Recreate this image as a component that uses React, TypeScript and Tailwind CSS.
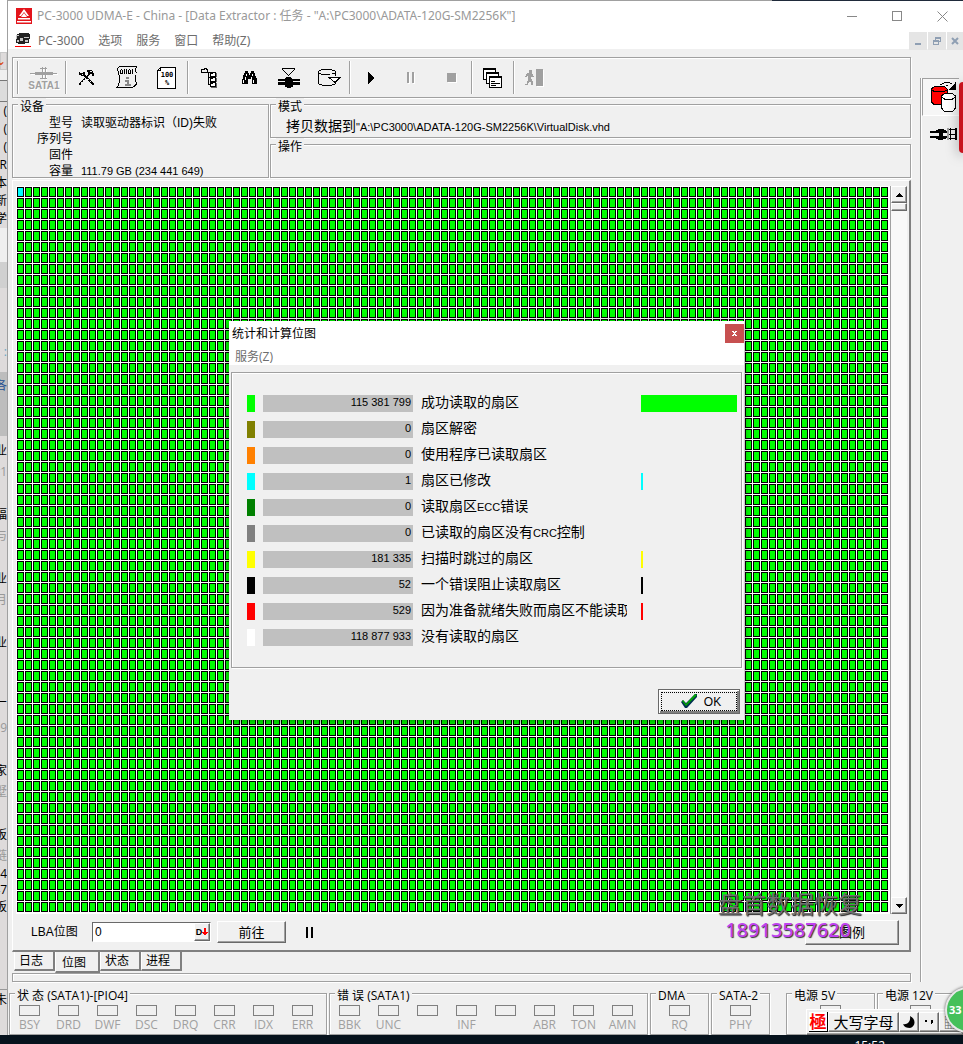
import { useState, type ReactNode } from "react";
import clsx from "clsx";

const ETCHED =
  "border border-[#a0a0a0] shadow-[1px_1px_0_#fff,inset_1px_1px_0_#fff]";
const RAISED =
  "border border-t-white border-l-white border-r-[#696969] border-b-[#696969] bg-[#f0f0f0] shadow-[inset_-1px_-1px_0_#a0a0a0]";
const PIXEL = "font-['Liberation_Sans','Noto_Sans_CJK_SC',sans-serif]";

const sectors = [
  { color: "#00ff00", count: "115 381 799", label: "成功读取的扇区", bar: 96 },
  { color: "#808000", count: "0", label: "扇区解密", bar: 0 },
  { color: "#ff8000", count: "0", label: "使用程序已读取扇区", bar: 0 },
  { color: "#00ffff", count: "1", label: "扇区已修改", bar: 2 },
  { color: "#008000", count: "0", label: "读取扇区ECC错误", bar: 0 },
  { color: "#808080", count: "0", label: "已读取的扇区没有CRC控制", bar: 0 },
  { color: "#ffff00", count: "181 335", label: "扫描时跳过的扇区", bar: 2 },
  { color: "#000000", count: "52", label: "一个错误阻止读取扇区", bar: 2 },
  { color: "#ff0000", count: "529", label: "因为准备就绪失败而扇区不能读取", bar: 2 },
  { color: "#ffffff", count: "118 877 933", label: "没有读取的扇区", bar: 0 },
];

const deviceRows = [
  { name: "型号", value: "读取驱动器标识（ID)失败", size: "text-xs" },
  { name: "序列号", value: "", size: "text-xs" },
  { name: "固件", value: "", size: "text-xs" },
  { name: "容量", value: "111.79 GB (234 441 649)", size: "text-[11px]" },
];

// Slivers of the windows lying behind, visible along the left edge
const behind = [
  { text: "", cls: "h-[52px] bg-white" },
  { text: "⌄", cls: "h-[18px] border border-[#c8c8c8] text-[#d83b01]" },
  { text: "", cls: "h-[10px] bg-[#f0f0f0]" },
  { text: "", cls: "h-[22px] border-y border-[#777] bg-[#dcdcdc]" },
  { text: "(", cls: "h-[18px]" },
  { text: "(", cls: "h-[18px]" },
  { text: "(", cls: "h-[18px]" },
  { text: "R", cls: "h-[18px]" },
  { text: "本", cls: "h-[18px]" },
  { text: "新", cls: "h-[18px]" },
  { text: "学", cls: "h-[18px]" },
  { text: "", cls: "h-[34px] bg-[#efefef]" },
  { text: "", cls: "h-[26px] bg-[#d0d0d0]" },
  { text: "", cls: "h-[34px]" },
  { text: "、", cls: "h-[20px]" },
  { text: ":", cls: "h-[20px] text-[#6aa7c4]" },
  { text: "", cls: "h-[10px]" },
  { text: "各", cls: "h-[64px] items-start bg-[#bdbdbd] pt-2 text-[#1d4f91]" },
  { text: "", cls: "h-[4px]" },
  { text: "业", cls: "h-[22px]" },
  { text: "#1", cls: "h-[20px] text-[#999]" },
  { text: "", cls: "h-[22px]" },
  { text: "福", cls: "h-[22px]" },
  { text: "与", cls: "h-[20px] text-[#999]" },
  { text: "", cls: "h-[22px]" },
  { text: "业", cls: "h-[22px]" },
  { text: "月", cls: "h-[20px] text-[#999]" },
  { text: "", cls: "h-[22px]" },
  { text: "业", cls: "h-[22px]" },
  { text: "", cls: "h-[42px]" },
  { text: "厂", cls: "h-[22px]" },
  { text: "9", cls: "h-[20px] text-[#999]" },
  { text: "", cls: "h-[22px]" },
  { text: "家", cls: "h-[22px]" },
  { text: "墅", cls: "h-[20px] text-[#999]" },
  { text: "", cls: "h-[22px]" },
  { text: "板", cls: "h-[22px]" },
  { text: "链", cls: "h-[20px] text-[#999]" },
  { text: "4", cls: "h-[16px]" },
  { text: "47", cls: "h-[16px]" },
  { text: "板", cls: "h-[18px]" },
  { text: "", cls: "h-[74px] border-b border-[#999]" },
  { text: "未", cls: "h-[20px]" },
];

function Etched({
  title,
  className,
  children,
}: {
  title: string;
  className?: string;
  children?: ReactNode;
}) {
  return (
    <fieldset className={clsx("min-w-0", ETCHED, className)}>
      <legend className="ml-[5px] h-3 whitespace-nowrap bg-[#f0f0f0] px-0.5 text-xs leading-[18px]">
        {title}
      </legend>
      {children}
    </fieldset>
  );
}

function Led({ label }: { label: string }) {
  return (
    <div className="flex w-[39px] shrink-0 flex-col items-center">
      <span className="h-[11px] w-[21px] border border-[#808080]" />
      <span className="mt-px h-4 text-xs leading-4 text-[#a0a0a0]">{label}</span>
    </div>
  );
}

function LedGroup({
  title,
  leds,
  className,
}: {
  title: string;
  leds: string[];
  className?: string;
}) {
  return (
    <Etched title={title} className={clsx("h-12", className)}>
      <div className={clsx("flex pt-1.5", leds.length === 1 && "justify-center")}>
        {leds.map((led, i) => (
          <Led key={i} label={led} />
        ))}
      </div>
    </Etched>
  );
}

function Tool({
  label,
  wide,
  children,
}: {
  label: string;
  wide?: boolean;
  children: ReactNode;
}) {
  return (
    <button
      type="button"
      aria-label={label}
      className={clsx(
        "flex h-[33px] items-center justify-center",
        wide ? "w-[46px]" : "w-10"
      )}
    >
      {children}
    </button>
  );
}

function Separator() {
  return <span className="h-[33px] w-0.5 border-l border-[#a0a0a0] bg-white" />;
}

function Svg({ w, h, children }: { w: number; h: number; children: ReactNode }) {
  return (
    <svg
      width={w}
      height={h}
      viewBox={`0 0 ${w} ${h}`}
      fill="none"
      stroke="#000"
      shapeRendering="crispEdges"
      aria-hidden="true"
    >
      {children}
    </svg>
  );
}

function Toolbar() {
  return (
    <div className={clsx("flex h-[41px] items-center overflow-hidden pl-1", ETCHED)}>
      <Separator />
      <Tool label="SATA1" wide>
        <span className="flex flex-col items-center pl-1 pt-1">
          <Svg w={28} h={13}>
            <path d="M1 7.500h27M13.500 1v12M16.500 1v12" stroke="#fff" />
            <path d="M0 6.500h5M22 6.500h5" stroke="#a0a0a0" />
            <path d="M5 5h18v3H5z" fill="#a0a0a0" stroke="none" />
            <path d="M12.500 0v12M15.500 0v12M10 1.500h7M10 11.500h7" stroke="#a0a0a0" />
          </Svg>
          <span className="font-['Liberation_Sans',sans-serif] text-[10px] font-bold leading-3 text-[#a0a0a0] [text-shadow:1px_1px_0_#fff]">
            SATA1
          </span>
        </span>
      </Tool>
      <Separator />
      <Tool label="工具">
        <Svg w={16} h={15}>
          <path d="M0 2h1v1h3V2h2v3h1v1h1v1h1v1h1v1h1v1h1v1h1v1h1v1h1v2h-2v-1h-1v-1h-1v-1h-1v-1h-1v-1H9v-1H8V9H7V8H6V7H5V6H2V5H0z" fill="#000" stroke="none" />
          <path d="M8 0h5v1h1v2h1v3h-2V4h-2v1h-1v1H9v1H8v1H7v1H6v1H5v1H4v1H3v1H2v2H0v-2h1v-1h1v-1h1v-1h1V9h1V8h1V7h1V6h1V5h1V2H8z" fill="#000" stroke="none" />
          <path d="M10.500 1.500h2M6 8.500h1M4 10.500h1M2 12.500h1M9 9.500h1M11 11.500h1M3 4.500h1" stroke="#f0f0f0" />
        </Svg>
      </Tool>
      <Tool label="脚本">
        <Svg w={22} h={23}>
          <path d="M3 .5h18M2.500 1v1M1.500 2v3M2.500 5v4M3.500 9v8M2.500 17v3M1.500 20v1M0 21.500h17M20.500 1v1M19.500 2v4M20.500 6v1M19.500 9v7M20.500 16v3M19.500 18v2M18.500 19v2M17.500 20v1" />
          <path d="M4.500 4v4M6.500 4v4M5 3.500h1M5 7.500h1M8.500 3v5M10.500 3v5M12.500 4v4M14.500 4v4M13 3.500h1M13 7.500h1M16.500 3v5" />
          <path d="M10 11h3v2h-3zM9 14h4v4h2v2H9v-2h2v-2H9z" fill="#888" stroke="none" />
        </Svg>
      </Tool>
      <Tool label="进度">
        <svg width="20" height="24" viewBox="0 0 20 24" aria-hidden="true">
          <g shapeRendering="crispEdges">
            <path d="M3.500 1.500h15v21H.5v-18z" fill="#fff" stroke="#000" />
            <path d="M.5 4.500h3v-3M18.500 2v21M1 22.500h18" fill="none" stroke="#000" />
          </g>
          <text x="10" y="11" textAnchor="middle" fontSize="7" fontWeight="700" fontFamily="DejaVu Sans Mono, monospace">
            100
          </text>
          <text x="10" y="19" textAnchor="middle" fontSize="7" fontWeight="700" fontFamily="DejaVu Sans Mono, monospace">
            %
          </text>
        </svg>
      </Tool>
      <Separator />
      <Tool label="树">
        <Svg w={16} h={20}>
          <path d="M.5 1.500h3v-1h2v1h1v3h-6zM7 4.500h2M7.500 5v12M8 9.500h2M8 16.500h2" />
          <path d="M9.500 4.500h5v4h-5zM9.500 9.500h5v4h-5zM9.500 14.500h5v4h-5z" fill="#fff" />
          <path d="M15.500 5v4M15.500 10v4M15.500 15v4M10 19.500h6" stroke="#666" />
          <path d="M10 5.500h2M10 10.500h2M10 15.500h2" />
        </Svg>
      </Tool>
      <Tool label="查找">
        <Svg w={15} h={14}>
          <path
            d="M3 0h3v2h1v2h1V2h1V0h3v2h1l1 5 1 1v5h-5V8H6v5H0V8l1-1 1-5h1z"
            fill="#000"
            stroke="none"
          />
          <path d="M4.500 3v2M10.500 3v2M3.500 6v3M9.500 6v3M1.500 9v3M11.500 9v3" stroke="#fff" />
        </Svg>
      </Tool>
      <Tool label="扇区">
        <Svg w={22} h={20}>
          <path d="M4 .5h13M4.500 1v1M5.500 2v1M6.500 3v1M7.500 4v1M8.500 5v1M9.500 6v1M10.500 7v1M11.500 6v1M12.500 5v1M13.500 4v1M14.500 3v1M15.500 2v1M16.500 1v1" />
          <path
            d="M8 9h5v1h1v1h8v2h-7v1h7v3h-7v2h-2v1H9v-1H7v-2H0v-3h7v-1H0v-2h7v-1h1z"
            fill="#000"
            stroke="none"
          />
        </Svg>
      </Tool>
      <Tool label="导出磁盘">
        <Svg w={23} h={18}>
          <path d="M3 .5h11M1 1.500h2M14 1.500h3M.5 2v13M17.500 2v5M1 4.500h2M3 5.500h9M14 4.500h3M1 15.500h3M4 16.500h10M14 15.500h3M17.500 13v2" />
          <path d="M11 8.500h11l-5 5z" fill="#fff" />
        </Svg>
      </Tool>
      <Separator />
      <Tool label="开始">
        <Svg w={7} h={12}>
          <path d="M0 0l6 6-6 6z" fill="#000" stroke="none" />
        </Svg>
      </Tool>
      <Tool label="暂停">
        <Svg w={9} h={12}>
          <path d="M1 1h2v11H1zM6 1h2v11H6z" fill="#fff" stroke="none" />
          <path d="M0 0h2v11H0zM5 0h2v11H5z" fill="#a0a0a0" stroke="none" />
        </Svg>
      </Tool>
      <Tool label="停止">
        <span className="h-[9px] w-[9px] bg-[#a0a0a0] shadow-[1px_1px_0_#fff]" />
      </Tool>
      <Separator />
      <Tool label="窗口">
        <Svg w={20} h={20}>
          <path d="M.5 .5h12v11H.5z" fill="#fff" />
          <path d="M0 1.500h13M4 4.500h12" />
          <path d="M3.500 4.500h12v11h-12z" fill="#fff" />
          <path d="M3 5.500h13" />
          <path d="M6.500 8.500h12v11h-12z" fill="#fff" />
          <path d="M6 9.500h13M8 13.500h4M8 15.500h9M8 17.500h5" />
        </Svg>
      </Tool>
      <Separator />
      <Tool label="退出">
        <Svg w={20} h={18}>
          <path d="M12 1h7v17h-7z" fill="#fff" stroke="none" />
          <path
            d="M11 0h7v17h-7zM4 1h3v3H4zM2 4h5v1h1v2h1v1H6v2h1v2h1v4H6v-3H4v1H3v2H0v-1h2v-3h1V7H2v1H0V7h1V5h1z"
            fill="#a0a0a0"
            stroke="none"
          />
        </Svg>
      </Tool>
    </div>
  );
}

function SectorMap() {
  return (
    <svg className="block h-[726px] w-full" shapeRendering="crispEdges" role="img" aria-label="位图">
      <defs>
        <pattern id="cell" width="8" height="11" patternUnits="userSpaceOnUse">
          <rect width="7" height="10" fill="#000" />
          <rect x="1" y="1" width="5" height="8" fill="#00ff00" />
        </pattern>
      </defs>
      <rect width="100%" height="726" fill="url(#cell)" />
      <rect x="1" y="1" width="5" height="8" fill="#00ffff" />
    </svg>
  );
}

function Scrollbar() {
  return (
    <div className="flex w-[17px] flex-col border-l border-[#a0a0a0] bg-[#f8f8f8]">
      <button type="button" aria-label="向上" className={clsx("flex h-[17px] items-center justify-center", RAISED)}>
        <Svg w={7} h={4}>
          <path d="M3 0h1v1h1v1h1v1h1v1H0V3h1V2h1V1h1z" fill="#000" stroke="none" />
        </Svg>
      </button>
      <span className={clsx("h-2", RAISED)} />
      <button type="button" aria-label="向下" className={clsx("mt-auto flex h-[17px] items-center justify-center", RAISED)}>
        <Svg w={7} h={4}>
          <path d="M0 0h7v1H6v1H5v1H4v1H3V3H2V2H1V1H0z" fill="#000" stroke="none" />
        </Svg>
      </button>
    </div>
  );
}

// Latin runs are set smaller than the Chinese around them
function MixedText({ text }: { text: string }) {
  return text.split(/([A-Z]+)/).map((part, i) =>
    i % 2 ? (
      <span key={i} className="text-[11px]">
        {part}
      </span>
    ) : (
      part
    )
  );
}

function StatsDialog({ onClose }: { onClose: () => void }) {
  return (
    <div
      role="dialog"
      aria-label="统计和计算位图"
      className="absolute left-[213px] top-[135px] w-[515px] bg-[#f0f0f0] pb-[6px] shadow-[0_1px_8px_rgba(0,0,0,0.45)]"
    >
      <div className="flex h-6 items-center justify-between bg-white pl-[3px]">
        <h2 className="pt-px text-xs">统计和计算位图</h2>
        <button
          type="button"
          aria-label="关闭"
          onClick={onClose}
          className="flex h-[19px] w-[19px] items-center justify-center bg-[#c75050]"
        >
          <Svg w={5} h={5}>
            <path d="M0 0h2v1h1V0h2v1H4v1H3v1h1v1h1v1H3V4H2v1H0V4h1V3h1V2H1V1H0z" fill="#fff" stroke="none" />
          </Svg>
        </button>
      </div>
      <div className="h-5 bg-white pl-1.5">
        <button type="button" className="text-xs leading-6 text-[#6d6d6d]">
          服务(Z)
        </button>
      </div>
      <div className={clsx("mx-0.5 mt-[7px] h-[296px] pl-[15px] pt-[22px]", ETCHED)}>
        <table className="table-fixed border-collapse">
          <tbody>
            {sectors.map((row) => (
              <tr key={row.label} className="h-[26px] align-top">
                <td className="w-4 p-0">
                  <div className="h-[17px] w-2" style={{ background: row.color }} />
                </td>
                <td className="w-[158px] p-0">
                  <div className={clsx("h-[17px] w-[150px] bg-[#c0c0c0] pr-0.5 text-right text-[11px] leading-[14px]", PIXEL)}>
                    {row.count}
                  </div>
                </td>
                <th scope="row" className="w-[220px] p-0 text-left font-normal">
                  <div className={clsx("h-[17px] w-[206px] overflow-hidden whitespace-nowrap text-[14px] leading-[14px]", PIXEL)}>
                    <MixedText text={row.label} />
                  </div>
                </th>
                <td className="p-0">
                  <div className="h-[17px]" style={{ width: row.bar, background: row.color }} />
                </td>
              </tr>
            ))}
          </tbody>
        </table>
      </div>
      <div className="mt-[21px] flex justify-end pr-1">
        <button
          type="button"
          onClick={onClose}
          className={clsx(
            "flex h-[25px] w-[82px] items-center justify-center gap-1.5 outline-1 -outline-offset-[4px] outline-dotted outline-black",
            "border border-[#696969] bg-[#f0f0f0] pl-1 shadow-[inset_1px_1px_0_#fff,inset_-2px_-2px_0_#808080]"
          )}
        >
          <svg width="17" height="15" viewBox="0 0 17 15" aria-hidden="true">
            <path d="M0 8l2-2 3 3L14 0h2v3L6 14H4z" fill="#003050" />
            <path d="M1 7l1-1 3 4L14 0l2 1L5 12z" fill="#00a800" />
          </svg>
          <span className={clsx("text-xs", PIXEL)}>OK</span>
        </button>
      </div>
    </div>
  );
}

function SideBar() {
  return (
    <aside className="mt-[29px] w-[43px] shrink-0 border-l border-[#a0a0a0] bg-[#f0f0f0] shadow-[inset_1px_0_0_#fff]">
      <div className="flex">
        <div className="min-w-0 flex-1 pl-px">
          <button
            type="button"
            aria-label="数据提取"
            className="flex h-[38px] w-full items-center border-b border-l border-t border-b-white border-l-[#a0a0a0] border-t-[#a0a0a0] bg-[#f6f6f6] pl-2"
          >
            <Svg w={26} h={30}>
              <path d="M9 2.500h2M11 1.500h2M13 .5h6M19 1.500h2M15 3.500h2" />
              <path d="M24 0h1v8h-7V7h1V6h1V5h1V4h1V3h1V2h1z" fill="#000" stroke="none" />
              <path d="M.5 7l3-2.500h10l2.500 2.500v13l-3 2.500h-10L.5 20z" fill="#f00" />
              <path d="M.5 8l3 1.500h9l3.500-1.500" />
              <path d="M10.500 14l3-2.500h8l3 2.500v12l-3 3.500h-8l-3-3.500z" fill="#fff" />
              <path d="M10.500 15l3 2h8l3-2" />
            </Svg>
          </button>
          <button type="button" aria-label="连接" className="flex h-9 w-full items-center pl-2">
            <Svg w={27} h={12}>
              <path d="M0 3h6V2h2V1h6v1h2v1h3v2h-6v3h6v2h-3v1h-3v1H8v-1H6v-1H0V8h9V5H0z" fill="#000" stroke="none" />
              <path d="M18 1.500h8M18 6.500h8M18 10.500h8M20.500 0v12M25.500 0v12M26.500 0v12" />
              <path d="M17.500 0v12M18.500 0v12" stroke="#a0a0a0" />
            </Svg>
          </button>
        </div>
        <div className="mt-1 h-[71px] w-1 rounded-l-sm bg-[#c8141e] shadow-[0_2px_12px_rgba(0,0,0,0.5)]" />
      </div>
    </aside>
  );
}

function ImeBar() {
  return (
    <div className={clsx("absolute right-0 top-[1009px] flex h-[26px] w-[157px] items-center overflow-hidden pl-0.5", RAISED)}>
      <button type="button" aria-label="极品输入法" className="flex h-5 w-[19px] shrink-0 items-center justify-center border-b border-r border-black bg-white text-[17px] font-bold leading-none text-[#f00]">
        極
      </button>
      <button type="button" className={clsx("h-5 w-[71px] shrink-0 whitespace-nowrap text-[15px] leading-4", RAISED)}>
        大写字母
      </button>
      <button type="button" aria-label="半角" className={clsx("flex h-5 w-5 shrink-0 items-center justify-center", RAISED)}>
        <svg width="12" height="12" viewBox="0 0 12 12" aria-hidden="true">
          <path d="M7 0c6 3 6 10 0 12-3 0-6-1-7-4 4 1 8-2 7-8z" />
        </svg>
      </button>
      <button type="button" aria-label="标点" className={clsx("flex h-5 w-5 shrink-0 items-center justify-center", RAISED)}>
        <Svg w={9} h={6}>
          <path d="M0 1h2v2H0zM6 1h2v3H7v1H6z" fill="#000" stroke="none" />
        </Svg>
      </button>
      <button type="button" aria-label="软键盘" className={clsx("h-5 w-6 shrink-0 text-[15px] leading-4 text-[#606060]", RAISED)}>
        ▦
      </button>
    </div>
  );
}

const tabs = ["日志", "位图", "状态", "进程"];
const menu = ["PC-3000", "选项", "服务", "窗口", "帮助(Z)"];

export default function App() {
  const [tab, setTab] = useState("位图");
  const [lba, setLba] = useState("0");
  const [statsOpen, setStatsOpen] = useState(true);

  return (
    <div className="relative overflow-hidden bg-[#06121c] font-['Open_Sans','Noto_Sans_CJK_SC',sans-serif] text-xs text-black">
      <div className="flex">
        <div className="flex w-2 shrink-0 flex-col overflow-hidden border-r border-[#a0a0a0] bg-[#dedbdb]" aria-hidden="true">
          {behind.map((item, i) => (
            <div key={i} className={clsx("flex shrink-0 items-center justify-end text-xs leading-none", item.cls)}>
              {item.text}
            </div>
          ))}
        </div>

        <div className="min-w-0 flex-1 bg-[#f0f0f0]">
          <div className="flex h-px bg-[#1f2a3a]">
            <span className="w-4/5 bg-[#a0a0a0]" />
          </div>

          {/* Title bar */}
          <header className="flex h-[30px] items-center bg-white pl-2">
            <svg width="16" height="16" viewBox="0 0 16 16" aria-hidden="true">
              <path d="M0 0h16v16H0z" fill="#e3141b" />
              <path d="M8 1l5 7h-2L8 4 5 8H3zM8 5l3 4H5zM2 10h12v1.500H2zM1 13h14v1.500H1z" fill="#fff" />
            </svg>
            <h1 className="min-w-0 flex-1 truncate pl-[5px] font-['Noto_Sans','Noto_Sans_CJK_SC',sans-serif] text-xs text-[#999]">
              PC-3000 UDMA-E - China - [Data Extractor : 任务 - "A:\PC3000\ADATA-120G-SM2256K"]
            </h1>
            <div className="flex items-center gap-[35px] pr-[15px]">
              <button type="button" aria-label="最小化" className="h-px w-[10px] bg-[#888]" />
              <button type="button" aria-label="最大化" className="h-[10px] w-[10px] border border-[#888]" />
              <button type="button" aria-label="关闭窗口">
                <svg width="11" height="11" viewBox="0 0 11 11" stroke="#888" aria-hidden="true">
                  <path d="M.5 .5l10 10M10.500 .5l-10 10" />
                </svg>
              </button>
            </div>
          </header>

          {/* Menu bar */}
          <nav className="flex h-[18px] items-center bg-white pl-[7px] text-[#6d6d6d]">
            <Svg w={16} h={14}>
              <path d="M4 0h10v1h1v5h-1v4h-4v1H3v-1H1V3h1V1h2z" fill="#222" stroke="none" />
              <path d="M1 2h3v1H2v3H1zM5 5h3v3H5zM9 4h5v1H9zM10 7h3v2h-3zM2 7h2v2H2z" fill="#c8c8c8" stroke="none" />
              <path d="M0 13.500h16" stroke="#f00" />
            </Svg>
            <div className="flex flex-1 gap-[14px] pl-[7px] font-['Noto_Sans','Noto_Sans_CJK_SC',sans-serif]">
              {menu.map((item) => (
                <button key={item} type="button" className="pt-0.5 leading-4">
                  {item}
                </button>
              ))}
            </div>
            <div className="flex gap-px pt-0.5 text-[#8f9fb3]">
              <button type="button" aria-label="最小化文档" className="flex h-[18px] w-[18px] items-center justify-center bg-[#e5e5e5]">
                <span className="mt-1.5 h-0.5 w-1.5 bg-[#8f9fb3]" />
              </button>
              <button type="button" aria-label="还原文档" className="flex h-[18px] w-[18px] items-center justify-center bg-[#e5e5e5]">
                <Svg w={8} h={8}>
                  <path d="M2.500 3V.5h5v4H6M2 1h6M.5 3.500h5v4h-5zM0 4h6" stroke="#8f9fb3" />
                </Svg>
              </button>
              <button type="button" aria-label="关闭文档" className="flex h-[18px] w-4 items-center justify-center bg-[#e5e5e5]">
                <svg width="8" height="8" viewBox="0 0 8 8" stroke="#8f9fb3" strokeWidth="2" aria-hidden="true">
                  <path d="M1 1l6 6M7 1L1 7" />
                </svg>
              </button>
            </div>
          </nav>

          <div className="flex gap-[9px] pl-1">
            <main className="min-w-0 flex-1 pt-2">
              <Toolbar />
              <div className="flex gap-px">
                <Etched title="设备" className="h-20 w-[257px] shrink-0">
                  <dl className="pt-[5px]">
                    {deviceRows.map((row) => (
                      <div key={row.name} className="flex h-4 gap-2 leading-4">
                        <dt className="w-[60px] text-right">{row.name}</dt>
                        <dd className={clsx("whitespace-nowrap", row.size, PIXEL)}>{row.value}</dd>
                      </div>
                    ))}
                  </dl>
                </Etched>
                <div className="min-w-0 flex-1">
                  <Etched title="模式" className="h-10">
                    <p className={clsx("truncate pl-[15px] pt-2 text-[11px] leading-4", PIXEL)}>
                      <span className="text-[14px]">拷贝数据到</span>"A:\PC3000\ADATA-120G-SM2256K\VirtualDisk.vhd
                    </p>
                  </Etched>
                  <Etched title="操作" className="h-10" />
                </div>
              </div>

              <section className="mt-0.5 border-b-2 border-l border-r-2 border-t border-b-[#808080] border-l-white border-r-[#808080] border-t-white pl-[3px] pr-0.5 pt-[5px]">
                <div className="relative flex">
                  <div className="min-w-0 flex-1 bg-white p-px">
                    <SectorMap />
                  </div>
                  <Scrollbar />
                  {statsOpen && <StatsDialog onClose={() => setStatsOpen(false)} />}
                </div>
                <form className="flex h-9 items-center pl-[15px] pr-2" onSubmit={(e) => e.preventDefault()}>
                  <label htmlFor="lba" className={clsx("w-[61px] text-xs", PIXEL)}>
                    LBA位图
                  </label>
                  <div className="flex h-5 w-[119px] border border-b-white border-l-[#696969] border-r-white border-t-[#696969] bg-white">
                    <input
                      id="lba"
                      value={lba}
                      onChange={(e) => setLba(e.target.value)}
                      className={clsx("min-w-0 flex-1 pl-0.5 text-xs outline-none", PIXEL)}
                    />
                    <button type="button" aria-label="十进制" className={clsx("flex w-4 items-center justify-center font-['Liberation_Sans',sans-serif] text-[9px] font-bold", RAISED)}>
                      D
                      <Svg w={6} h={8}>
                        <path d="M2 0h2v4h2v1H5v1H4v1H2V6H1V5H0V4h2z" fill="#f00" stroke="none" />
                      </Svg>
                    </button>
                  </div>
                  <button type="submit" className={clsx("ml-1.5 h-[22px] w-[69px] text-[13px] leading-[18px]", RAISED)}>
                    前往
                  </button>
                  <button type="button" aria-label="暂停" className="ml-5 flex gap-[3px]">
                    <span className="h-[11px] w-0.5 bg-black" />
                    <span className="h-[11px] w-0.5 bg-black" />
                  </button>
                  <button type="button" className={clsx("ml-auto h-[25px] w-[94px] text-[13px] leading-5", RAISED)}>
                    图例
                  </button>
                </form>
              </section>

              <div role="tablist" className="flex h-[21px] items-start pl-0.5">
                {tabs.map((item) => (
                  <button
                    key={item}
                    type="button"
                    role="tab"
                    aria-selected={tab === item}
                    onClick={() => setTab(item)}
                    className={clsx(
                      "border-b-2 border-l border-r-2 border-b-[#808080] border-l-white border-r-[#808080] pl-1 text-left text-xs leading-4",
                      tab === item ? "h-[21px] w-[45px] pl-1.5 pt-[3px]" : "h-[19px] w-[41px] pt-px"
                    )}
                  >
                    {item}
                  </button>
                ))}
              </div>
              <div className={clsx("h-[9px]", ETCHED)} />
            </main>
            <SideBar />
          </div>

          {/* Register state */}
          <footer className="mt-[5px] flex gap-0.5 overflow-hidden pl-px">
            <LedGroup
              title="状 态 (SATA1)-[PIO4]"
              className="w-[318px] shrink-0"
              leds={["BSY", "DRD", "DWF", "DSC", "DRQ", "CRR", "IDX", "ERR"]}
            />
            <LedGroup
              title="错 误 (SATA1)"
              className="w-[319px] shrink-0"
              leds={["BBK", "UNC", "", "INF", "", "ABR", "TON", "AMN"]}
            />
            <LedGroup title="DMA" className="w-[59px] shrink-0" leds={["RQ"]} />
            <LedGroup title="SATA-2" className="w-[59px] shrink-0" leds={["PHY"]} />
            <LedGroup title="电源 5V" className="ml-auto w-[89px] shrink-0" leds={[""]} />
            <LedGroup title="电源 12V" className="w-[86px] shrink-0" leds={[""]} />
          </footer>
        </div>
      </div>

      {/* Taskbar */}
      <div className="flex h-[9px] justify-end overflow-hidden pr-[78px] text-white">
        <time className="pt-[3px] leading-4">15:52</time>
      </div>

      <div className="pointer-events-none absolute right-[101px] top-[890px] whitespace-nowrap text-right">
        <p className="text-[24px] leading-7 text-[#707070] [text-shadow:1px_1px_1px_#222]">盘首数据恢复</p>
        <p className="pr-[11px] font-['Noto_Sans',sans-serif] text-[20px] font-medium leading-6 text-[#c040f0] [text-shadow:1px_1px_1px_#333]">
          18913587620
        </p>
      </div>
      <ImeBar />
      <div className="absolute -right-7 top-[987px] flex h-[46px] w-[46px] items-center rounded-full border-2 border-[#e8e8e8] bg-[#45c05a] pl-0.5 text-[11px] font-bold text-white shadow-[0_0_3px_#555]">
        33
      </div>
    </div>
  );
}
